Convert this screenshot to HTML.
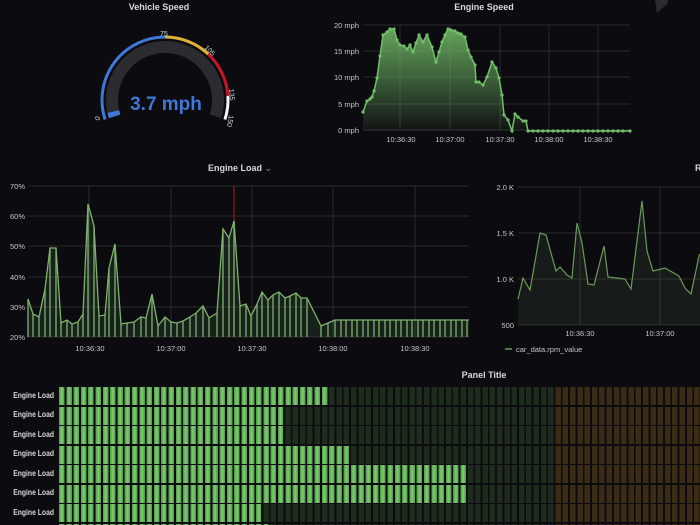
<!DOCTYPE html>
<html><head><meta charset="utf-8">
<style>
html,body{margin:0;padding:0;background:#0c0b10;width:700px;height:525px;overflow:hidden;font-family:"Liberation Sans",sans-serif;}
svg text{font-family:"Liberation Sans",sans-serif;}
.bars{position:absolute;left:0;top:0;width:700px;height:525px;overflow:hidden;}
.row{position:absolute;left:59px;height:18px;width:641px;
background:
 repeating-linear-gradient(90deg,rgba(12,11,16,0) 0,rgba(12,11,16,0) 5.5px,#0c0b10 5.5px,#0c0b10 7.3px),
 linear-gradient(90deg,#1e2c1d 0,#1e2c1d 494px,#3a2c14 494px,#3a2c14 641px);}
.row .g{position:absolute;left:0;top:0;height:18px;
background:repeating-linear-gradient(90deg,#4f9a48 0,#80cc72 2.75px,#4f9a48 5.5px,#0c0b10 5.5px,#0c0b10 7.3px);}
.lbl{position:absolute;left:0;width:54px;text-align:right;font-size:8px;color:#d8d9da;font-weight:bold;transform:scaleX(0.85);transform-origin:right;}
</style></head><body>
<svg width="700" height="525" style="position:absolute;left:0;top:0">
<defs>
<linearGradient id="gs" x1="0" y1="0" x2="0" y2="1"><stop offset="0" stop-color="#73bf69" stop-opacity="0.85"/><stop offset="1" stop-color="#73bf69" stop-opacity="0.05"/></linearGradient>
<marker id="dot" markerWidth="4" markerHeight="4" refX="2" refY="2" markerUnits="userSpaceOnUse"><circle cx="2" cy="2" r="1.6" fill="#73bf69"/></marker>
</defs>
<g fill="#d8d9da" font-size="9" font-weight="bold" text-anchor="middle">
<text x="159" y="10">Vehicle Speed</text>
<text x="484" y="10">Engine Speed</text>
<text x="240" y="171">Engine Load <tspan fill="#8e8e8e" font-weight="normal">⌄</tspan></text>
<text x="695" y="171" text-anchor="start">R</text>
<text x="484" y="378">Panel Title</text>
</g>
<path d="M655 0 L668 0 L668 3 L657 13 Z" fill="#2a2a30"/>
<path d="M114.6 116.4 A53 53 0 1 1 215.4 116.4" fill="none" stroke="#2c2b2f" stroke-width="12"/>
<path d="M114.6 116.4 A53 53 0 0 1 113.3 111.6" fill="none" stroke="#3f78d6" stroke-width="12"/>
<g fill="none" stroke-width="3">
<path d="M105.1 119.5 A63 63 0 0 1 165 37" stroke="#3f78d6"/>
<path d="M165 37 A63 63 0 0 1 208.2 54.1" stroke="#e0b03a"/>
<path d="M208.2 54.1 A63 63 0 0 1 227.9 96" stroke="#c4162a"/>
<path d="M227.9 96 A63 63 0 0 1 224.9 119.5" stroke="#f4f4f4"/>
</g>
<text x="166" y="110" fill="#3d78d8" font-size="19" font-weight="bold" text-anchor="middle">3.7 mph</text>
<g fill="#d8d9da" font-size="7">
<text x="160" y="36">75</text>
<text transform="translate(204,48) rotate(45)">105</text>
<text transform="translate(229,89) rotate(85)">135</text>
<text transform="translate(229,115) rotate(100)">150</text>
<text transform="translate(99,121) rotate(-70)">0</text>
</g>
<g stroke="#2a2a2e" stroke-width="1">
<line x1="363" y1="25" x2="630" y2="25"/><line x1="363" y1="51" x2="630" y2="51"/><line x1="363" y1="77" x2="630" y2="77"/><line x1="363" y1="104" x2="630" y2="104"/><line x1="363" y1="130" x2="630" y2="130"/>
<line x1="400" y1="25" x2="400" y2="130"/><line x1="450" y1="25" x2="450" y2="130"/><line x1="500" y1="25" x2="500" y2="130"/><line x1="549" y1="25" x2="549" y2="130"/><line x1="598" y1="25" x2="598" y2="130"/>
</g>
<g fill="#c7c7c7" font-size="7.5" text-anchor="end">
<text x="359" y="28">20 mph</text><text x="359" y="54">15 mph</text><text x="359" y="80">10 mph</text><text x="359" y="107">5 mph</text><text x="359" y="133">0 mph</text>
</g>
<g fill="#c7c7c7" font-size="7.5" text-anchor="middle">
<text x="401" y="142">10:36:30</text><text x="450" y="142">10:37:00</text><text x="500" y="142">10:37:30</text><text x="549" y="142">10:38:00</text><text x="598" y="142">10:38:30</text>
</g>
<path d="M363 112 L367 101 L372 97 L374 91 L377 78 L380 56 L383 35 L387 32 L390 29 L394 29 L397 40 L400 45 L404 46 L407 49 L410 45 L413 52 L419 35 L423 42 L427 35 L432 47 L436 62 L442 42 L448 29 L455 31 L461 34 L465 37 L468 50 L475 65 L476 82 L479 82 L483 85 L487 77 L492 62 L496 68 L499 78 L502 95 L504 115 L508 120 L512 131 L515 114 L518 117 L523 121 L526 121 L528 131 L630 131 L363 131 Z" fill="url(#gs)"/>
<polyline points="363,112 367,101 370,99 372,97 374,91 377,78 380,56 383,35 387,32 390,29 394,29 397,40 400,45 404,46 407,49 410,45 413,52 416,43 419,35 423,42 427,35 432,47 436,62 439,52 442,42 445,35 448,29 451,30 455,31 458,33 461,34 465,37 468,50 471,57 475,65 476,82 479,82 483,85 487,77 492,62 496,68 499,78 502,95 504,115 508,120 512,131 515,114 518,117 523,121 526,121 528,131 533,131 538,131 543,131 548,131 553,131 558,131 563,131 568,131 573,131 578,131 583,131 588,131 593,131 598,131 603,131 608,131 613,131 618,131 623,131 630,131" fill="none" stroke="#73bf69" stroke-width="1.5" marker-start="url(#dot)" marker-mid="url(#dot)" marker-end="url(#dot)"/>
<g stroke="#2a2a2e" stroke-width="1">
<line x1="28" y1="186" x2="469" y2="186"/><line x1="28" y1="216" x2="469" y2="216"/><line x1="28" y1="246" x2="469" y2="246"/><line x1="28" y1="277" x2="469" y2="277"/><line x1="28" y1="307" x2="469" y2="307"/><line x1="28" y1="337" x2="469" y2="337"/>
<line x1="89" y1="186" x2="89" y2="337"/><line x1="171" y1="186" x2="171" y2="337"/><line x1="252" y1="186" x2="252" y2="337"/><line x1="333" y1="186" x2="333" y2="337"/><line x1="415" y1="186" x2="415" y2="337"/>
</g>
<g fill="#c7c7c7" font-size="7.5">
<text x="10" y="189">70%</text><text x="10" y="219">60%</text><text x="10" y="249">50%</text><text x="10" y="280">40%</text><text x="10" y="310">30%</text><text x="10" y="340">20%</text>
</g>
<g fill="#c7c7c7" font-size="7.5" text-anchor="middle">
<text x="90" y="351">10:36:30</text><text x="171" y="351">10:37:00</text><text x="252" y="351">10:37:30</text><text x="333" y="351">10:38:00</text><text x="415" y="351">10:38:30</text>
</g>
<line x1="234" y1="186" x2="234" y2="337" stroke="#8a1a1a" stroke-width="1.2"/>
<path d="M28 299 L33 314 L39 317 L45 289 L50 248 L56 248 L61 323 L67 320 L72 324 L78 322 L83 314 L88 204 L94 226 L99 316 L105 315 L109 268 L115 244 L121 324 L127 323 L134 322 L141 317 L146 318 L152 294 L158 326 L165 317 L171 322 L177 323 L183 321 L190 317 L196 313 L203 306 L209 318 L217 313 L223 229 L229 238 L234 221 L240 306 L246 304 L251 316 L257 304 L262 292 L268 300 L273 295 L279 292 L285 298 L290 296 L296 293 L301 298 L307 298 L321 326 L328 323 L335 320 L469 320 L469 337 L28 337 Z" fill="#73bf69" fill-opacity="0.12"/>
<polyline points="28,299 33,314 39,317 45,289 50,248 56,248 61,323 67,320 72,324 78,322 83,314 88,204 94,226 99,316 105,315 109,268 115,244 121,324 127,323 134,322 141,317 146,318 152,294 158,326 165,317 171,322 177,323 183,321 190,317 196,313 203,306 209,318 217,313 223,229 229,238 234,221 240,306 246,304 251,316 257,304 262,292 268,300 273,295 279,292 285,298 290,296 296,293 301,298 307,298 321,326 328,323 335,320 469,320" fill="none" stroke="#7eb26d" stroke-width="1.3"/>
<g stroke="#7eb26d" stroke-width="1.3">
<path d="M28 299V337M33 314V337M39 317V337M45 289V337M50 248V337M56 248V337M61 323V337M67 320V337M72 324V337M78 322V337M83 314V337M88 204V337M94 226V337M99 316V337M105 315V337M109 268V337M115 244V337M121 324V337M127 323V337M134 322V337M141 317V337M146 318V337M152 294V337M158 326V337M165 317V337M171 322V337M177 323V337M183 321V337M190 317V337M196 313V337M203 306V337M209 318V337M217 313V337M223 229V337M229 238V337M234 221V337M240 306V337M246 304V337M251 316V337M257 304V337M262 292V337M268 300V337M273 295V337M279 292V337M285 298V337M290 296V337M296 293V337M301 298V337M307 298V337M321 326V337M328 323V337M335 320V337"/>
<path d="M341 320V337M346 320V337M352 320V337M357 320V337M363 320V337M368 320V337M374 320V337M379 320V337M385 320V337M390 320V337M396 320V337M401 320V337M407 320V337M412 320V337M418 320V337M423 320V337M429 320V337M434 320V337M440 320V337M445 320V337M451 320V337M456 320V337M462 320V337M467 320V337"/>
</g>
<g stroke="#2a2a2e" stroke-width="1">
<line x1="518" y1="187" x2="700" y2="187"/><line x1="518" y1="233" x2="700" y2="233"/><line x1="518" y1="279" x2="700" y2="279"/><line x1="518" y1="325" x2="700" y2="325"/>
<line x1="580" y1="187" x2="580" y2="325"/><line x1="660" y1="187" x2="660" y2="325"/>
</g>
<g fill="#c7c7c7" font-size="7.5" text-anchor="end">
<text x="514" y="190">2.0 K</text><text x="514" y="236">1.5 K</text><text x="514" y="282">1.0 K</text><text x="514" y="328">500</text>
</g>
<g fill="#c7c7c7" font-size="7.5" text-anchor="middle">
<text x="580" y="336">10:36:30</text><text x="660" y="336">10:37:00</text>
</g>
<path d="M518 299 L523 278 L530 290 L540 233 L546 235 L556 271 L560 267 L567 275 L572 278 L577 223 L582 243 L588 284 L594 285 L604 246 L608 277 L617 278 L625 279 L631 289 L642 201 L647 251 L653 271 L665 268 L679 276 L685 288 L691 294 L699 256 L700 254 L700 325 L518 325 Z" fill="#7eb26d" fill-opacity="0.1"/>
<polyline points="518,299 523,278 530,290 540,233 546,235 556,271 560,267 567,275 572,278 577,223 582,243 588,284 594,285 604,246 608,277 617,278 625,279 631,289 642,201 647,251 653,271 665,268 679,276 685,288 691,294 699,256 700,254" fill="none" stroke="#6a9a5a" stroke-width="1.2"/>
<line x1="505" y1="349" x2="512" y2="349" stroke="#6a9a5a" stroke-width="1.5"/>
<text x="516" y="352" fill="#c7c7c7" font-size="7.5">car_data.rpm_value</text>
</svg>
<div class="bars">
<div class="lbl" style="top:391px">Engine Load</div><div class="row" style="top:387px"><div class="g" style="width:269px"></div></div>
<div class="lbl" style="top:410px">Engine Load</div><div class="row" style="top:406.5px"><div class="g" style="width:224px"></div></div>
<div class="lbl" style="top:430px">Engine Load</div><div class="row" style="top:426px"><div class="g" style="width:224px"></div></div>
<div class="lbl" style="top:449px">Engine Load</div><div class="row" style="top:445.5px"><div class="g" style="width:290px"></div></div>
<div class="lbl" style="top:469px">Engine Load</div><div class="row" style="top:465px"><div class="g" style="width:407px"></div></div>
<div class="lbl" style="top:488px">Engine Load</div><div class="row" style="top:484.5px"><div class="g" style="width:407px"></div></div>
<div class="lbl" style="top:508px">Engine Load</div><div class="row" style="top:504px"><div class="g" style="width:202px"></div></div>
<div class="row" style="top:523.5px"><div class="g" style="width:209px"></div></div>
</div>
</body></html>
